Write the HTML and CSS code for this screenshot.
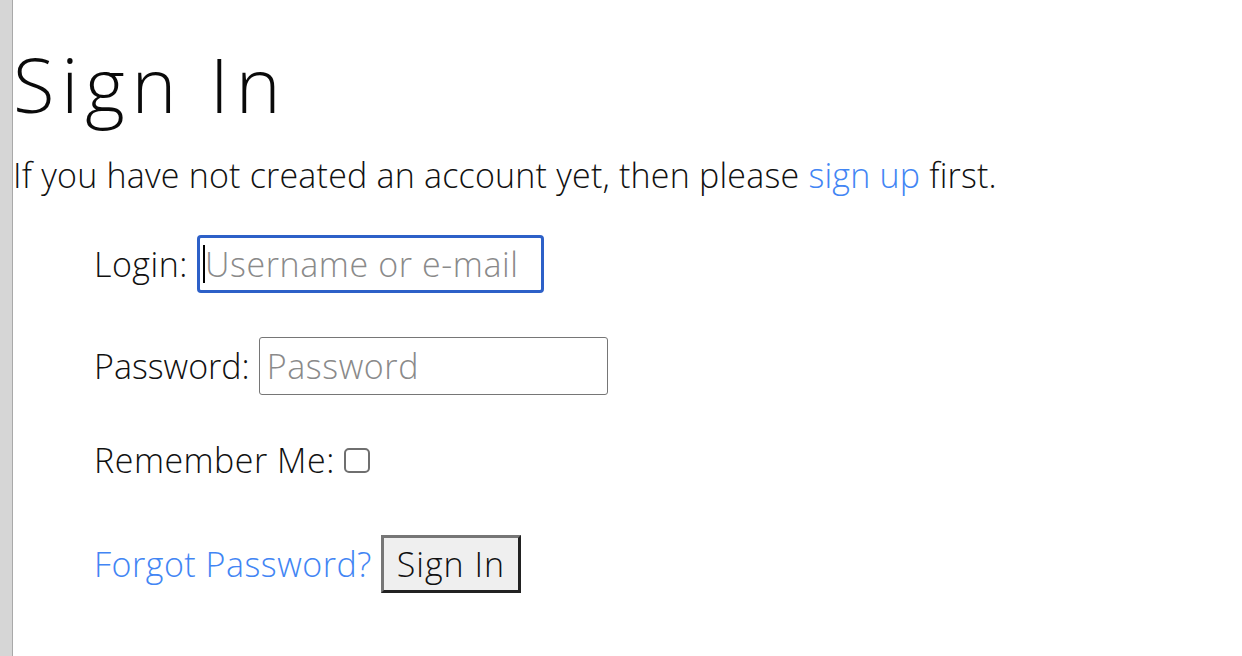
FILE: index.html
```
<!DOCTYPE html>
<html lang="en">
<head>
<meta charset="utf-8">
<title>Sign In</title>
<link rel="stylesheet" href="styles.css">
</head>
<body>
<div class="page">
  <div class="sidebar"></div>
  <main class="content">
    <h1 class="title">Sign In</h1>
    <p class="intro">If you have not created an account yet, then please <a class="link" href="#">sign up</a> first.</p>
    <form class="form">
      <div class="row row-login">
        <label class="label" for="login">Login:</label>
        <span class="field-wrap">
          <input class="field field-focused" id="login" type="text" placeholder="Username or e-mail">
          <span class="caret"></span>
        </span>
      </div>
      <div class="row row-password">
        <label class="label label-tight" for="password">Password:</label>
        <input class="field" id="password" type="password" placeholder="Password">
      </div>
      <div class="row row-remember">
        <label class="label" for="remember">Remember Me:</label>
        <input class="check" id="remember" type="checkbox">
      </div>
      <div class="row row-actions">
        <a class="link" href="#">Forgot Password?</a>
        <button class="btn" type="submit">Sign In</button>
      </div>
    </form>
  </main>
</div>
</body>
</html>
```
FILE: styles.css
```
html, body {
  margin: 0;
  padding: 0;
  background: #ffffff;
}

body {
  font-family: "Open Sans", "Liberation Sans", sans-serif;
  font-weight: 300;
  color: #111111;
}

.page {
  display: flex;
  min-height: 656px;
}

.sidebar {
  width: 12px;
  flex: none;
  background: #d6d6d6;
  border-right: 1px solid #a9a9a9;
}

.content {
  flex: 1;
  padding: 44px 0 0 0;
}

.title {
  margin: 0;
  font-size: 76px;
  font-weight: 300;
  line-height: 80px;
  letter-spacing: 6.8px;
  color: #0a0a0a;
}

.intro {
  margin: 31px 0 0 0;
  font-size: 34px;
  line-height: 40px;
  letter-spacing: 0.2px;
  white-space: nowrap;
}

.link {
  color: #4285f4;
  text-decoration: none;
}

.form {
  margin: 40px 0 0 81px;
  display: flex;
  flex-direction: column;
}

.row {
  display: flex;
  align-items: center;
  gap: 9px;
  font-size: 34px;
  line-height: 40px;
  letter-spacing: 0.5px;
}

.label-tight {
  letter-spacing: 0px;
}

.row-password {
  margin-top: 44px;
}

.row-remember {
  margin-top: 45px;
}

.row-actions {
  margin-top: 55px;
}

.field-wrap {
  position: relative;
  display: inline-flex;
}

.field {
  box-sizing: border-box;
  width: 349px;
  height: 58px;
  margin: 0;
  padding: 0 7px;
  border: 1px solid #767676;
  border-radius: 3px;
  background: #ffffff;
  font-family: "Open Sans", "Liberation Sans", sans-serif;
  font-weight: 300;
  font-size: 34px;
  letter-spacing: 0.6px;
  color: #111111;
  outline: none;
}

.field::placeholder {
  color: #8a8a8a;
}

.field-focused {
  width: 347px;
  border: 3px solid #2d60c8;
  border-radius: 4px;
  padding: 0 5px;
}

.caret {
  position: absolute;
  left: 6px;
  top: 10px;
  width: 2px;
  height: 38px;
  background: #000000;
}

.check {
  appearance: none;
  -webkit-appearance: none;
  box-sizing: border-box;
  width: 26px;
  height: 25px;
  margin: 0;
  border: 2px solid #6f6f6f;
  border-radius: 5px;
  background: #ffffff;
}

.btn {
  box-sizing: border-box;
  width: 140px;
  height: 58px;
  margin: 0;
  padding: 0;
  border-width: 3px;
  border-style: solid;
  border-color: #767676 #222222 #222222 #767676;
  background: #efefef;
  font-family: "Open Sans", "Liberation Sans", sans-serif;
  font-weight: 300;
  font-size: 34px;
  letter-spacing: 1px;
  color: #111111;
}
```
